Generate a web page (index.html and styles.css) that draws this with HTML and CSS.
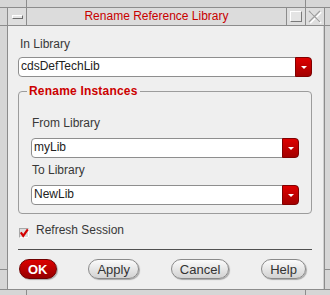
FILE: index.html
```html
<!DOCTYPE html>
<html lang="en">
<head>
    <meta charset="UTF-8">
    <title>Rename Reference Library</title>
    <link rel="stylesheet" href="styles.css">
</head>
<body>
    <div class="window">
        <div class="edge edge-top">
            <span class="seg seg-first"></span>
            <span class="seg seg-mid"></span>
            <span class="seg seg-last"></span>
        </div>

        <div class="edge edge-side">
            <span class="seg seg-first"></span>
            <span class="seg seg-mid"></span>
            <span class="seg seg-last"></span>
        </div>

        <div class="client">
            <div class="titlebar">
                <div class="tb-btn tb-menu"><span class="menu-icon"></span></div>
                <div class="title">Rename Reference Library</div>
                <div class="tb-btn tb-max"><span class="max-icon"></span></div>
                <div class="tb-btn tb-close">
                    <svg width="14" height="14" viewBox="0 0 14 14">
                        <path d="M2 2 L13 13 M13 2 L2 13" stroke="#ffffff" stroke-width="2" fill="none"/>
                        <path d="M1 1 L12 12 M12 1 L1 12" stroke="#a0a0a0" stroke-width="1.4" fill="none"/>
                    </svg>
                </div>
            </div>

            <div class="dialog">
                <div class="label">In Library</div>
                <div class="combo">
                    <span class="value">cdsDefTechLib</span>
                    <span class="drop"><i></i></span>
                </div>

                <fieldset class="group">
                    <legend>Rename Instances</legend>
                    <div class="label">From Library</div>
                    <div class="combo">
                        <span class="value">myLib</span>
                        <span class="drop"><i></i></span>
                    </div>
                    <div class="label label-gap">To Library</div>
                    <div class="combo">
                        <span class="value">NewLib</span>
                        <span class="drop"><i></i></span>
                    </div>
                </fieldset>

                <div class="check-row">
                    <svg class="checkbox" width="10" height="10" viewBox="0 0 10 10">
                        <rect x="0.5" y="0.5" width="9" height="9" fill="#dcdcdc" stroke="#a8a8a8"/>
                        <path d="M0.5 9.5 H9.5 V0.5" stroke="#ffffff" fill="none"/>
                        <path d="M1.8 4.4 L4.2 7.8 L8.8 1.4" stroke="#d40000" stroke-width="2.2" fill="none"/>
                    </svg>
                    <span>Refresh Session</span>
                </div>

                <div class="separator"></div>

                <div class="buttons">
                    <button class="btn btn-ok">OK</button>
                    <button class="btn">Apply</button>
                    <button class="btn">Cancel</button>
                    <button class="btn">Help</button>
                </div>
            </div>
        </div>

        <div class="edge edge-side">
            <span class="seg seg-first"></span>
            <span class="seg seg-mid"></span>
            <span class="seg seg-last"></span>
        </div>

        <div class="edge edge-bottom">
            <span class="seg seg-first"></span>
            <span class="seg seg-mid"></span>
            <span class="seg seg-last"></span>
        </div>
    </div>
</body>
</html>
```

FILE: styles.css
```css
* {
    box-sizing: border-box;
    margin: 0;
    padding: 0;
}

body {
    font-family: 'Liberation Sans', Arial, sans-serif;
    font-size: 12px;
    color: #383838;
    background: #d6d6d6;
}

.window {
    width: 330px;
    height: 295px;
    display: grid;
    grid-template-columns: 7px 318px 5px;
    grid-template-rows: 8px 281px 6px;
    background: #d6d6d6;
}

/* window frame pieces */
.edge {
    display: flex;
}

.edge-top,
.edge-bottom {
    grid-column: 1 / 4;
}

.edge-top {
    border-bottom: 1px solid #8c8c8c;
}

.edge-bottom {
    border-top: 1px solid #8c8c8c;
}

.edge-top .seg-first,
.edge-bottom .seg-first {
    width: 27px;
    border-right: 1px solid #8c8c8c;
}

.edge-top .seg-mid,
.edge-bottom .seg-mid {
    flex: 1;
}

.edge-top .seg-last,
.edge-bottom .seg-last {
    width: 25px;
    border-left: 1px solid #8c8c8c;
}

.edge-side {
    flex-direction: column;
}

.edge-side .seg-first {
    height: 18px;
    border-bottom: 1px solid #8c8c8c;
}

.edge-side .seg-mid {
    flex: 1;
}

.edge-side .seg-last {
    height: 20px;
    border-top: 1px solid #8c8c8c;
}

.client {
    display: flex;
    flex-direction: column;
    border-left: 1px solid #8c8c8c;
    border-right: 1px solid #8c8c8c;
}

/* title bar */
.titlebar {
    display: flex;
    height: 18px;
    border-bottom: 1px solid #8c8c8c;
    background: #dcdcdc;
}

.tb-btn {
    width: 19px;
    display: flex;
    align-items: center;
    justify-content: center;
    border-right: 1px solid #8c8c8c;
    background: #dedede;
}

.tb-close {
    width: 18px;
    border-right: none;
}

.menu-icon {
    width: 11px;
    height: 4px;
    border-top: 1px solid #ffffff;
    border-left: 1px solid #ffffff;
    border-right: 1px solid #6c6c6c;
    border-bottom: 1px solid #6c6c6c;
    background: #e6e6e6;
}

.max-icon {
    width: 12px;
    height: 11px;
    border-top: 1px solid #ffffff;
    border-left: 1px solid #ffffff;
    border-right: 1px solid #7a7a7a;
    border-bottom: 1px solid #7a7a7a;
    background: #e4e4e4;
}

.title {
    flex: 1;
    text-align: center;
    color: #c80000;
    line-height: 17px;
    border-right: 1px solid #8c8c8c;
}

/* dialog body */
.dialog {
    flex: 1;
    background: #efefef;
    padding: 11px 11px 0 10px;
    border-right: 1px solid #d0d0d0;
}

.label {
    line-height: 14px;
    padding-left: 2px;
    margin-bottom: 6px;
}

.combo {
    display: flex;
    height: 20px;
    background: #ffffff;
    border: 1px solid #8e8e8e;
    border-radius: 4px;
    color: #222;
}

.combo .value {
    flex: 1;
    padding-left: 2px;
    line-height: 16px;
}

.combo .drop {
    width: 17px;
    margin: -1px -1px -1px 0;
    display: flex;
    align-items: center;
    justify-content: center;
    background: linear-gradient(#de0000, #a30000);
    border: 1px solid #820000;
    border-radius: 0 4px 4px 0;
}

.combo .drop i {
    width: 0;
    height: 0;
    border-left: 3px solid transparent;
    border-right: 3px solid transparent;
    border-top: 3px solid #ffffff;
}

.group {
    margin-top: 7px;
    padding: 18px 12px 8px;
    border: 1px solid #9c9c9c;
    border-radius: 4px;
}

.group legend {
    margin-left: -4px;
    padding: 0 2px;
    line-height: 14px;
    font-weight: bold;
    letter-spacing: 0.2px;
    color: #cc0000;
}

.group .label {
    padding-left: 1px;
    margin-bottom: 8px;
}

.group .label-gap {
    margin-top: 5px;
}

.check-row {
    display: flex;
    align-items: flex-start;
    gap: 7px;
    margin-top: 9px;
    padding-left: 1px;
    line-height: 14px;
}

.checkbox {
    margin-top: 5px;
}

.separator {
    height: 1px;
    margin-top: 11px;
    background: #505050;
}

.buttons {
    display: flex;
    justify-content: space-between;
    margin-top: 9px;
    padding: 0 6px 0 1px;
}

.btn {
    height: 20px;
    padding: 0 8px;
    border: 1px solid #8a8a8a;
    border-radius: 10px;
    background: linear-gradient(#fbfbfb, #d2d2d2);
    box-shadow: 1px 1px 1px rgba(0, 0, 0, 0.3);
    font-family: 'Liberation Sans', Arial, sans-serif;
    font-size: 13px;
    color: #333;
}

.btn-ok {
    background: linear-gradient(#dc0000, #960000);
    border-color: #700000;
    color: #ffffff;
    font-weight: bold;
}
```
